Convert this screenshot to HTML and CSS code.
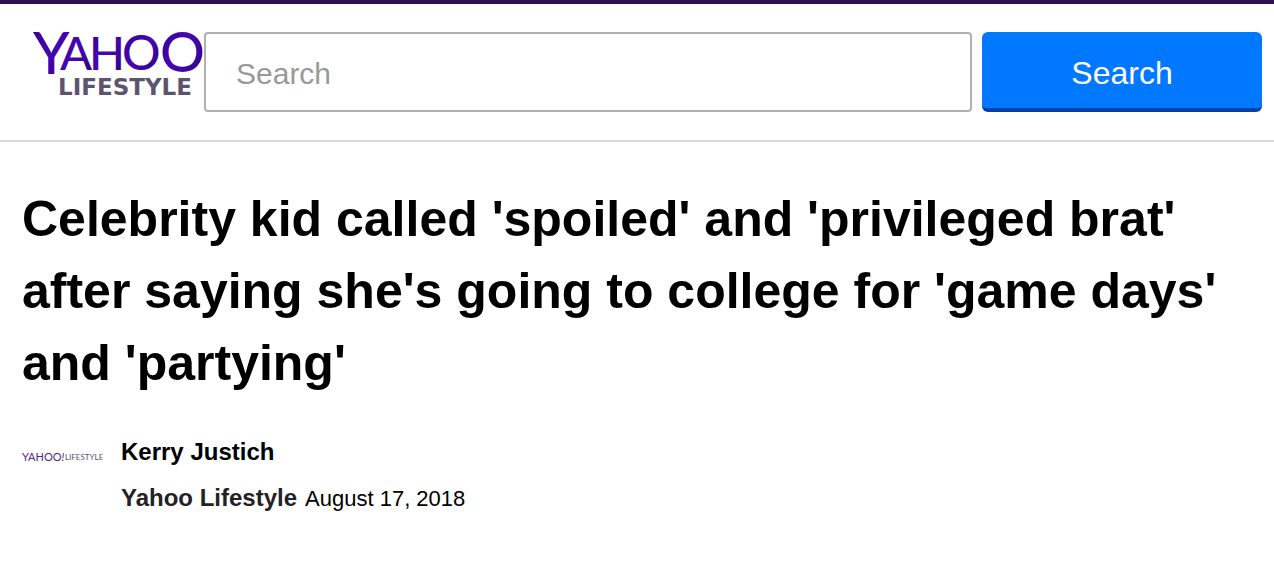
FILE: index.html
```
<!DOCTYPE html>
<html lang="en">
    <head>
        <meta charset="utf-8">
        <title>Yahoo Lifestyle</title>
        <link rel="stylesheet" href="styles.css">
    </head>
    <body>
        <header class="header">
            <a class="logo" href="#">
                <svg width="170" height="70" viewBox="0 0 170 70" role="img" aria-label="Yahoo Lifestyle">
                    <defs>
                        <linearGradient id="purple" x1="0" y1="0" x2="1" y2="1">
                            <stop offset="0" stop-color="#32008c"/>
                            <stop offset="0.5" stop-color="#4707b4"/>
                            <stop offset="1" stop-color="#2b0078"/>
                        </linearGradient>
                    </defs>
                    <g class="logo-name">
                        <text x="-1" y="42" font-size="58">Y</text>
                        <text x="26" y="38" font-size="47">A</text>
                        <text x="55" y="38" font-size="47">H</text>
                        <text x="88" y="38" font-size="48">O</text>
                        <text x="126" y="40" font-size="56">O</text>
                    </g>
                    <text class="logo-section" x="24" y="63">LIFESTYLE</text>
                </svg>
            </a>
            <form class="search">
                <input class="search-input" type="text" name="p" placeholder="Search" aria-label="Search">
                <button class="search-button" type="submit">Search</button>
            </form>
        </header>
        <main class="article">
            <h1 class="headline">Celebrity kid called 'spoiled' and 'privileged brat' after saying she's going to college for 'game days' and 'partying'</h1>
            <div class="byline">
                <a class="byline-logo" href="#">
                    <svg width="81" height="14" viewBox="0 0 81 14" role="img" aria-label="Yahoo! Lifestyle">
                        <text class="mini-name" x="0" y="11">YAHOO<tspan font-style="italic">!</tspan></text>
                        <text class="mini-section" x="43" y="10">LIFESTYLE</text>
                    </svg>
                </a>
                <div>
                    <div class="author">Kerry Justich</div>
                    <div class="source">
                        <a class="provider" href="#">Yahoo Lifestyle</a>
                        <time class="date" datetime="2018-08-17">August 17, 2018</time>
                    </div>
                </div>
            </div>
        </main>
    </body>
</html>
```
FILE: styles.css
```
* {
    box-sizing: border-box;
}

body {
    margin: 0;
    background: #fff;
    color: #000;
    font-family: "Liberation Sans", Arial, Helvetica, sans-serif;
}

/* header */
.header {
    display: flex;
    align-items: flex-start;
    border-top: 4px solid #2d1152;
    border-bottom: 2px solid #d8d8d8;
    padding: 28px 12px 28px 34px;
}

.logo {
    flex: 0 0 170px;
    height: 70px;
}

.logo svg {
    display: block;
    overflow: visible;
}

.logo-name {
    font-family: Lato, sans-serif;
    font-weight: 500;
    fill: url(#purple);
}

.logo-section {
    font-family: "DejaVu Sans", sans-serif;
    font-size: 23px;
    font-weight: 700;
    fill: #5b5370;
}

.search {
    display: flex;
    flex: 1;
    gap: 10px;
}

.search-input {
    flex: 1;
    min-width: 0;
    height: 80px;
    border: 2px solid #b0b0b0;
    border-radius: 4px;
    padding: 4px 30px 0;
    background: #fff;
    font-family: inherit;
    font-size: 30px;
}

.search-input::placeholder {
    color: #999;
}

.search-button {
    flex: 0 0 280px;
    height: 80px;
    border: 0;
    border-bottom: 4px solid #003fb0;
    border-radius: 6px;
    padding-top: 8px;
    background: #0078ff;
    color: #fff;
    font-family: inherit;
    font-size: 32px;
}

/* article */
.article {
    padding: 41px 22px;
}

.headline {
    margin: 0;
    font-size: 50px;
    line-height: 72px;
}

.byline {
    display: flex;
    gap: 18px;
    margin-top: 30px;
}

.byline-logo {
    padding-top: 21px;
}

.byline-logo svg {
    display: block;
}

.mini-name {
    font-family: Lato, sans-serif;
    font-size: 11px;
    fill: #4a2a86;
}

.mini-section {
    font-family: Lato, sans-serif;
    font-size: 8px;
    fill: #5b5370;
}

.author {
    font-size: 24px;
    font-weight: bold;
    line-height: 46px;
}

.source {
    display: flex;
    align-items: baseline;
    gap: 8px;
    line-height: 46px;
}

.provider {
    color: #222;
    font-size: 24px;
    font-weight: bold;
    text-decoration: none;
}

.date {
    font-size: 22px;
}
```
